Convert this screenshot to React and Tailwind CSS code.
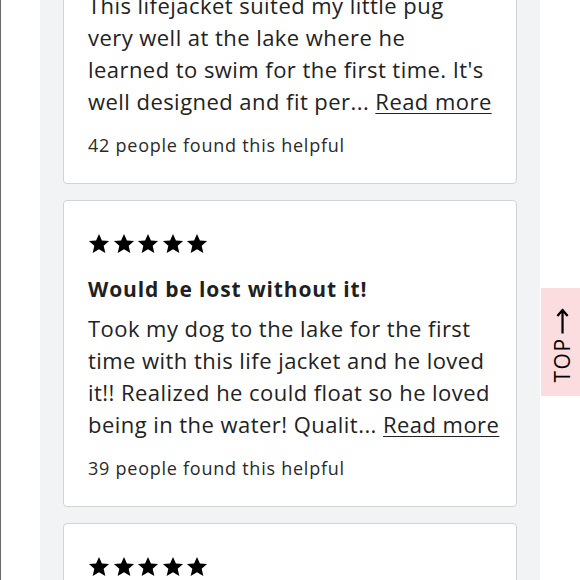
import React from "react";

const reviews = [
  {
    title: "Great for first swim",
    lines: [
      "This lifejacket suited my little pug",
      "very well at the lake where he",
      "learned to swim for the first time. It's",
      "well designed and fit per...",
    ],
    helpful: 42,
  },
  {
    title: "Would be lost without it!",
    lines: [
      "Took my dog to the lake for the first",
      "time with this life jacket and he loved",
      "it!! Realized he could float so he loved",
      "being in the water! Qualit...",
    ],
    helpful: 39,
  },
  {
    title: "Perfect fit",
    lines: ["Bought this for our lab and it fits great."],
    helpful: 21,
  },
];

function Star() {
  return (
    <svg viewBox="0 0 24 24" className="w-[22px] h-[22px]" fill="#000">
      <path d="M12 1l3.2 7.1 7.8.7-5.9 5.2 1.8 7.7L12 17.7 5.1 21.7l1.8-7.7L1 8.8l7.8-.7z" />
    </svg>
  );
}

function ReviewCard({ review }) {
  return (
    <div className="bg-white border border-[#d2d3d4] rounded-[4px] pl-6 pr-4 pt-8 pb-[26px]">
      <div className="flex gap-[2.5px] h-[21px] items-center">
        {[0, 1, 2, 3, 4].map((i) => (
          <Star key={i} />
        ))}
      </div>
      <h3 className="mt-[21px] text-[21px] leading-[28px] font-bold tracking-[0.85px] text-[#1f1f1f]">
        {review.title}
      </h3>
      <div className="mt-[9px] text-[22px] leading-[32px] tracking-[0.45px] text-[#222]">
        {review.lines.map((line, i) => (
          <div key={i} className="whitespace-nowrap">
            {line}
            {i === review.lines.length - 1 && review.lines.length > 1 && (
              <>
                {" "}
                <a className="underline underline-offset-[3px] decoration-1">Read more</a>
              </>
            )}
          </div>
        ))}
      </div>
      <p className="mt-4 text-[18px] leading-[24px] tracking-[0.75px] text-[#2a2a2a]">
        {review.helpful} people found this helpful
      </p>
    </div>
  );
}

export default function App() {
  return (
    <div
      className="relative h-[580px] overflow-hidden bg-white border-l border-[#6b6b6b]"
      style={{ fontFamily: '"Open Sans", "Liberation Sans", sans-serif' }}
    >
      <div className="ml-[39px] w-[500px] min-h-[700px] bg-[#f2f3f4] px-[23px]">
        <div className="-mt-[123px] flex flex-col gap-4">
          {reviews.map((r, i) => (
            <ReviewCard key={i} review={r} />
          ))}
        </div>
      </div>

      {/* Back to top tab */}
      <button className="absolute right-0 top-[288px] w-[39px] h-[108px] bg-[#fbdde0] flex items-center justify-center">
        <span className="-rotate-90 mt-[6px] ml-[3px] flex items-center gap-[3px] whitespace-nowrap text-[21px] leading-none text-black tracking-[1.5px]">
          TOP
          <svg viewBox="0 0 28 14" className="w-[26px] h-[14px]" fill="none" stroke="#000" strokeWidth="2.4">
            <path d="M1 7h25M20 1.5L26.5 7 20 12.5" />
          </svg>
        </span>
      </button>
    </div>
  );
}
